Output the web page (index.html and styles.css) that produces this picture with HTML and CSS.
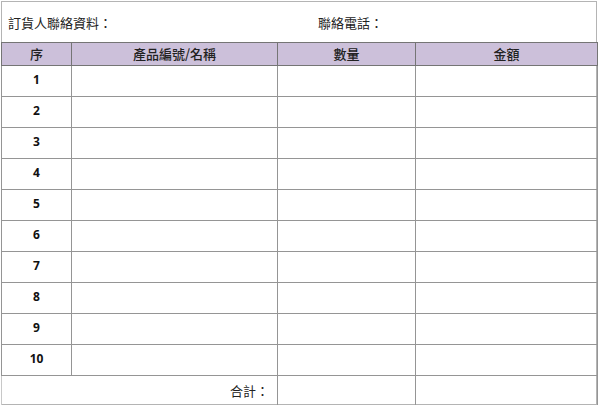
FILE: index.html
```html
<!DOCTYPE html>
<html lang="zh-Hant">
<head>
<meta charset="utf-8">
<link rel="stylesheet" href="styles.css">
</head>
<body>
<div class="sheet">
  <div class="title">
    <span class="t1">訂貨人聯絡資料：</span>
    <span class="t2">聯絡電話：</span>
  </div>
  <table class="grid">
    <colgroup>
      <col class="c1"><col class="c2"><col class="c3"><col class="c4">
    </colgroup>
    <thead>
      <tr><th>序</th><th>產品編號/名稱</th><th>數量</th><th>金額</th></tr>
    </thead>
    <tbody>
      <tr><td class="n">1</td><td></td><td></td><td></td></tr>
      <tr><td class="n">2</td><td></td><td></td><td></td></tr>
      <tr><td class="n">3</td><td></td><td></td><td></td></tr>
      <tr><td class="n">4</td><td></td><td></td><td></td></tr>
      <tr><td class="n">5</td><td></td><td></td><td></td></tr>
      <tr><td class="n">6</td><td></td><td></td><td></td></tr>
      <tr><td class="n">7</td><td></td><td></td><td></td></tr>
      <tr><td class="n">8</td><td></td><td></td><td></td></tr>
      <tr><td class="n">9</td><td></td><td></td><td></td></tr>
      <tr><td class="n">10</td><td></td><td></td><td></td></tr>
      <tr class="sum"><td colspan="2" class="label">合計：</td><td></td><td></td></tr>
    </tbody>
  </table>
</div>
</body>
</html>
```

FILE: styles.css
```css
html, body {
  margin: 0;
  padding: 0;
  background: #ffffff;
}
body {
  font-family: "Noto Sans CJK TC", "Noto Sans", sans-serif;
  color: #222;
}
.sheet {
  margin: 1px 0 0 1px;
  width: 596px;
  height: 404px;
  border: 1px solid #b4b4b4;
  box-sizing: border-box;
  display: flex;
  flex-direction: column;
}
.title {
  height: 40px;
  flex: none;
  display: flex;
  align-items: center;
  font-size: 13px;
  padding-left: 6px;
  padding-top: 1px;
  box-sizing: border-box;
}
.t1 {
  width: 310px;
}
.grid {
  border-collapse: collapse;
  table-layout: fixed;
  width: 596px;
  margin-left: -1px;
}
.c1 { width: 70px; }
.c2 { width: 206px; }
.c3 { width: 138px; }
.c4 { width: 182px; }
th {
  background: #ccc0da;
  height: 22px;
  padding: 0;
  border: 1px solid #757575;
  font-size: 13px;
  font-weight: 500;
  line-height: 22px;
  color: #222;
}
td {
  height: 30px;
  padding: 0;
  border: 1px solid #959595;
}
td.n {
  text-align: center;
  padding-bottom: 3px;
  box-sizing: border-box;
  font-family: "Open Sans", "Liberation Sans", sans-serif;
  font-weight: 700;
  font-size: 12px;
  color: #111;
}
.sum td {
  height: 29px;
  border-bottom: 1px solid #c8c8c8;
}
.sum td.label {
  border-left: 1px solid #c8c8c8;
  text-align: right;
  padding-right: 8px;
  padding-bottom: 2px;
  font-size: 13px;
}
```
